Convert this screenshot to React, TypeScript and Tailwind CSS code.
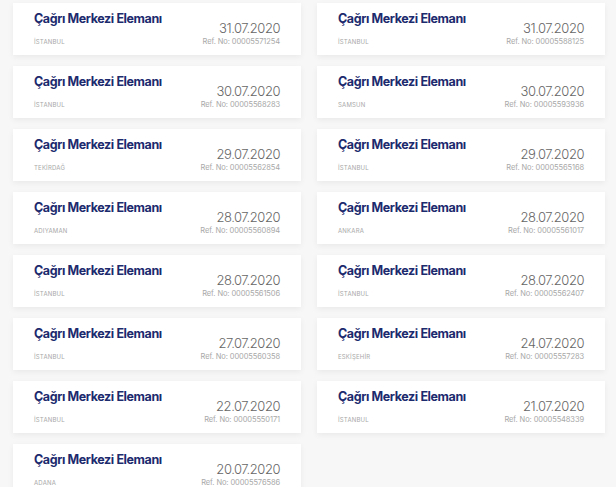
const jobs = [
  { city: "İSTANBUL", date: "31.07.2020", ref: "00005571254" },
  { city: "İSTANBUL", date: "31.07.2020", ref: "00005588125" },
  { city: "İSTANBUL", date: "30.07.2020", ref: "00005568283" },
  { city: "SAMSUN", date: "30.07.2020", ref: "00005593936" },
  { city: "TEKİRDAĞ", date: "29.07.2020", ref: "00005562854" },
  { city: "İSTANBUL", date: "29.07.2020", ref: "00005565168" },
  { city: "ADIYAMAN", date: "28.07.2020", ref: "00005560894" },
  { city: "ANKARA", date: "28.07.2020", ref: "00005561017" },
  { city: "İSTANBUL", date: "28.07.2020", ref: "00005561506" },
  { city: "İSTANBUL", date: "28.07.2020", ref: "00005562407" },
  { city: "İSTANBUL", date: "27.07.2020", ref: "00005560358" },
  { city: "ESKİŞEHİR", date: "24.07.2020", ref: "00005557283" },
  { city: "İSTANBUL", date: "22.07.2020", ref: "00005550171" },
  { city: "İSTANBUL", date: "21.07.2020", ref: "00005548339" },
  { city: "ADANA", date: "20.07.2020", ref: "00005576586" },
];

function JobCard({ city, date, refNo }: { city: string; date: string; refNo: string }) {
  return (
    <div className="flex h-[52px] justify-between bg-white pl-[21px] pr-[21px] shadow-[0_2px_6px_rgba(0,0,0,0.06)]">
      <div className="flex flex-col pt-[7px]">
        <span className="text-[12.5px] font-bold leading-[18px] tracking-[-0.4px] text-[#1c2a6e]">
          Çağrı Merkezi Elemanı
        </span>
        <span className="mt-[10px] text-[6px] leading-[8px] tracking-[0.2px] text-[#a8a8a8]">{city}</span>
      </div>
      <div className="flex flex-col items-end pt-[17px]">
        <span className="text-[13px] font-light leading-[17px] tracking-[-0.45px] text-[#666]">{date}</span>
        <span className="text-[7.5px] leading-[10px] tracking-[-0.1px] text-[#a8a8a8]">Ref. No: {refNo}</span>
      </div>
    </div>
  );
}

export default function App() {
  return (
    <div className="h-[487px] overflow-hidden bg-[#f7f7f7] pl-[13px] pr-[11px] pt-[3px] font-['Inter',sans-serif]">
      <div className="grid grid-cols-2 gap-x-[16px] gap-y-[11px]">
        {jobs.map((j, i) => (
          <JobCard key={i} city={j.city} date={j.date} refNo={j.ref} />
        ))}
      </div>
    </div>
  );
}
